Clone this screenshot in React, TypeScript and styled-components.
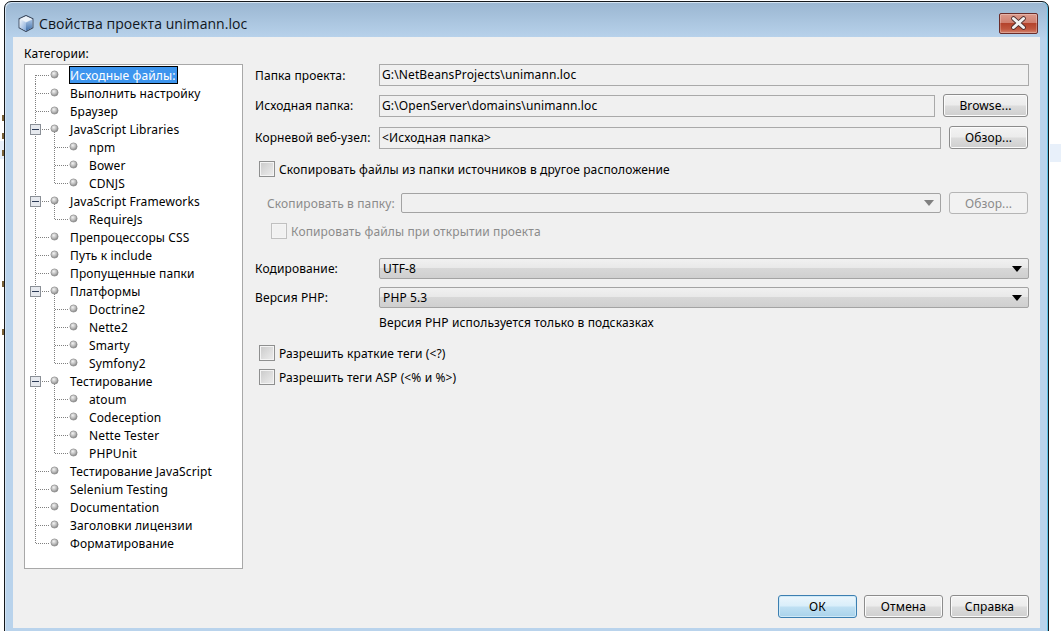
import React from "react";
import styled, { createGlobalStyle, css } from "styled-components";

const GlobalStyle = createGlobalStyle`
    html, body {
        margin: 0;
        height: 100%;
        overflow: hidden;
        background: #fff;
    }
    body {
        font-family: "Noto Sans", "Liberation Sans", sans-serif;
        font-size: 12px;
        letter-spacing: 0.12px;
        color: #000;
    }
`;

const Desktop = styled.div`
    display: flex;
    width: 1061px;
    height: 631px;
    overflow: hidden;
`;

const LeftStrip = styled.div`
    flex: none;
    width: 4px;
    display: flex;
    flex-direction: column;
    align-items: flex-end;
`;

/* bits of the page that lies behind the dialog */
const PageMark = styled.span<{ $top: number }>`
    width: 2px;
    height: 6px;
    margin-top: ${(p) => p.$top}px;
    background: #7a6238;
`;

const LeftPageBit = styled.div`
    align-self: stretch;
    height: 18px;
    margin-top: 2px;
    background: #e8f0fa;
    display: flex;
    justify-content: flex-end;
`;

const RightStrip = styled.div`
    flex: 1;
    padding-top: 144px;
`;

const PageBit = styled.div`
    height: 18px;
    background: #e8f0fa;
    margin-left: 1px;
`;

const Window = styled.div`
    flex: none;
    box-sizing: border-box;
    width: 1045px;
    height: 640px;
    margin-top: 1px;
    border: 1px solid #14181c;
    border-radius: 7px 7px 0 0;
    background: linear-gradient(180deg, #9ab6d1 0, #b9d3ec 37px, #b9d3ec 100%);
    box-shadow: inset -1px 0 0 #5fc4e8, inset 1px 1px 0 #d5e4f2;
    padding: 0 8px;
`;

const TitleBar = styled.div`
    box-sizing: border-box;
    height: 35px;
    display: flex;
    align-items: center;
    padding: 7px 2px 0 5px;
`;

const TitleText = styled.div`
    margin-left: 5px;
    font-family: "Open Sans", "Noto Sans", sans-serif;
    font-size: 14px;
    letter-spacing: 0.06px;
    color: #10161c;
    flex: 1;
`;

const CloseButton = styled.div`
    box-sizing: border-box;
    width: 39px;
    height: 21px;
    display: flex;
    align-items: center;
    justify-content: center;
    border: 1px solid #6b2d2a;
    border-radius: 2px;
    background: linear-gradient(180deg, #dc9a8c 0, #d08070 45%, #b4432c 50%, #c0573f 80%, #d48672 100%);
    box-shadow: inset 0 0 0 1px rgba(255, 255, 255, 0.25);
`;

const Client = styled.div`
    height: 591px;
    box-sizing: border-box;
    background: #f0f0f0;
    padding: 10px 11px 0;
    display: flex;
    flex-direction: column;
`;

const Main = styled.div`
    height: 522px;
    display: flex;
    gap: 12px;
`;

const TreeColumn = styled.div`
    flex: none;
    width: 219px;
    display: flex;
    flex-direction: column;
`;

const TreeCaption = styled.div`
    height: 14px;
    line-height: 14px;
    margin-bottom: 3px;
`;

const TreeBox = styled.div`
    flex: 1;
    box-sizing: border-box;
    background: #fff;
    border: 1px solid #a8a8a8;
    padding-top: 1px;
`;

const TreeRow = styled.div`
    height: 18px;
    display: flex;
    align-items: center;
`;

const TreeGutter = styled.svg`
    flex: none;
    display: block;
`;

const TreeLabel = styled.span<{ $selected?: boolean }>`
    box-sizing: border-box;
    height: 18px;
    line-height: 18px;
    padding: 0 1px 0 0;
    margin-left: -1px;
    white-space: nowrap;
    border: 1px solid transparent;
    ${(p) =>
        p.$selected &&
        css`
            background: #3d95ee;
            border-color: #000;
            color: #fff;
        `}
`;

const Form = styled.div`
    flex: 1;
    display: flex;
    flex-direction: column;
    min-width: 0;
`;

const Row = styled.div<{ $top: number; $inset?: number }>`
    display: flex;
    align-items: center;
    gap: 8px;
    margin-top: ${(p) => p.$top}px;
    padding-left: ${(p) => p.$inset ?? 0}px;
`;

const FieldLabel = styled.label<{ $width?: number; $disabled?: boolean }>`
    flex: none;
    width: ${(p) => p.$width ?? 116}px;
    white-space: nowrap;
    color: ${(p) => (p.$disabled ? "#8b8b8b" : "#000")};
`;

const TextField = styled.div`
    flex: 1;
    box-sizing: border-box;
    height: 22px;
    line-height: 20px;
    padding-left: 2px;
    border: 1px solid #a9a9a9;
    background: #f0f0f0;
    white-space: nowrap;
    margin-left: -8px;
`;

const Button = styled.div<{ $width: number; $height?: number; $disabled?: boolean; $primary?: boolean }>`
    flex: none;
    box-sizing: border-box;
    width: ${(p) => p.$width}px;
    height: ${(p) => p.$height ?? 23}px;
    display: flex;
    align-items: center;
    justify-content: center;
    border: 1px solid #8c8c8c;
    border-radius: 3px;
    background: linear-gradient(180deg, #f3f3f3 0, #ececec 48%, #dcdcdc 52%, #cfcfcf 100%);
    box-shadow: inset 0 0 0 1px #fbfbfb;
    ${(p) =>
        p.$primary &&
        css`
            border-color: #3c7fb1;
            background: linear-gradient(180deg, #ecf6fc 0, #d9eefa 48%, #bfe0f3 52%, #a9d2ea 100%);
            box-shadow: inset 0 0 0 1px #cfe9f7;
        `}
    ${(p) =>
        p.$disabled &&
        css`
            border-color: #b5b5b5;
            background: #f2f2f2;
            box-shadow: none;
            color: #8b8b8b;
        `}
`;

const SideButton = styled(Button)`
    margin-right: 1px;
`;

const Select = styled.div<{ $disabled?: boolean }>`
    flex: 1;
    box-sizing: border-box;
    height: 21px;
    display: flex;
    align-items: center;
    justify-content: space-between;
    padding: 0 5px 0 3px;
    border: 1px solid #a3a3a3;
    border-radius: 2px;
    margin-left: -8px;
    background: linear-gradient(180deg, #f1f1f1 0, #e9e9e9 45%, #d8d8d8 47%, #cfcfcf 100%);
    ${(p) =>
        p.$disabled &&
        css`
            height: 20px;
            margin-left: 0;
            background: #f0f0f0;
        `}
`;

const Arrow = styled.span<{ $disabled?: boolean }>`
    width: 0;
    height: 0;
    border-left: 5px solid transparent;
    border-right: 5px solid transparent;
    border-top: 6px solid ${(p) => (p.$disabled ? "#808080" : "#000")};
    margin-right: 1px;
`;

const CheckRow = styled.div<{ $top: number; $inset: number; $disabled?: boolean }>`
    display: flex;
    align-items: center;
    gap: 4px;
    height: 16px;
    margin-top: ${(p) => p.$top}px;
    padding-left: ${(p) => p.$inset}px;
    white-space: nowrap;
    color: ${(p) => (p.$disabled ? "#8b8b8b" : "#000")};
`;

const CheckBox = styled.span<{ $disabled?: boolean }>`
    flex: none;
    box-sizing: border-box;
    width: 16px;
    height: 16px;
    border: 1px solid ${(p) => (p.$disabled ? "#c0c0c0" : "#8e8f8f")};
    box-shadow: inset 0 0 0 1px #f4f4f4;
    background: ${(p) =>
        p.$disabled ? "#f1f1f1" : "linear-gradient(135deg, #c9c9c9 0, #dedede 55%, #ededed 100%)"};
`;

const Hint = styled.div`
    margin-top: 8px;
    padding-left: 124px;
    height: 14px;
    line-height: 14px;
`;

const Footer = styled.div`
    margin-top: 26px;
    display: flex;
    justify-content: flex-end;
    gap: 7px;
`;

type Node = {
    label: string;
    level: 0 | 1;
    expander?: boolean;
    lastChild?: boolean;
};

const nodes: Node[] = [
    { label: "Исходные файлы:", level: 0 },
    { label: "Выполнить настройку", level: 0 },
    { label: "Браузер", level: 0 },
    { label: "JavaScript Libraries", level: 0, expander: true },
    { label: "npm", level: 1 },
    { label: "Bower", level: 1 },
    { label: "CDNJS", level: 1, lastChild: true },
    { label: "JavaScript Frameworks", level: 0, expander: true },
    { label: "RequireJs", level: 1, lastChild: true },
    { label: "Препроцессоры CSS", level: 0 },
    { label: "Путь к include", level: 0 },
    { label: "Пропущенные папки", level: 0 },
    { label: "Платформы", level: 0, expander: true },
    { label: "Doctrine2", level: 1 },
    { label: "Nette2", level: 1 },
    { label: "Smarty", level: 1 },
    { label: "Symfony2", level: 1, lastChild: true },
    { label: "Тестирование", level: 0, expander: true },
    { label: "atoum", level: 1 },
    { label: "Codeception", level: 1 },
    { label: "Nette Tester", level: 1 },
    { label: "PHPUnit", level: 1, lastChild: true },
    { label: "Тестирование JavaScript", level: 0 },
    { label: "Selenium Testing", level: 0 },
    { label: "Documentation", level: 0 },
    { label: "Заголовки лицензии", level: 0 },
    { label: "Форматирование", level: 0 },
];

const DOT = { stroke: "#808080", strokeDasharray: "1 1", strokeWidth: 1 };

// connector lines, expander box and ball of a tree row, x counted from the box edge
const Gutter = ({ node, index, first, last }: { node: Node; index: number; first: boolean; last: boolean }) => {
    const width = node.level === 0 ? 45 : 64;
    const ballX = node.level === 0 ? 29.5 : 48.5;
    const fill = `ball-${index}`;
    return (
        <TreeGutter width={width} height={18} viewBox={`0 0 ${width} 18`}>
            <defs>
                <radialGradient id={fill} cx="40%" cy="35%" r="70%">
                    <stop offset="0" stopColor="#f4f4f4" />
                    <stop offset="0.6" stopColor="#b5b5b5" />
                    <stop offset="1" stopColor="#7b7b7b" />
                </radialGradient>
            </defs>
            <line x1={10.5} x2={10.5} y1={first ? 9 : 0} y2={last ? 9 : 18} {...DOT} />
            {node.level === 0 && <line x1={11} x2={24} y1={9.5} y2={9.5} {...DOT} />}
            {node.level === 1 && (
                <>
                    <line x1={29.5} x2={29.5} y1={0} y2={node.lastChild ? 9 : 18} {...DOT} />
                    <line x1={30} x2={43} y1={9.5} y2={9.5} {...DOT} />
                </>
            )}
            {node.expander && (
                <>
                    <rect x={5.5} y={4.5} width={10} height={10} fill="#e6e9ee" stroke="#8a8f96" />
                    <line x1={7} x2={14} y1={9.5} y2={9.5} stroke="#2b3a55" />
                    <line x1={29.5} x2={29.5} y1={12} y2={18} {...DOT} />
                </>
            )}
            <circle cx={ballX} cy={8.5} r={3.6} fill={`url(#${fill})`} stroke="#8d8d8d" strokeWidth={0.7} />
        </TreeGutter>
    );
};

const CubeIcon = () => (
    <svg width="16" height="17" viewBox="2 1 14 16">
        <defs>
            <linearGradient id="cube-left" x1="0" y1="0" x2="1" y2="1">
                <stop offset="0" stopColor="#f2f6fb" />
                <stop offset="1" stopColor="#7fa6d8" />
            </linearGradient>
            <linearGradient id="cube-right" x1="0" y1="0" x2="0" y2="1">
                <stop offset="0" stopColor="#a9c4e6" />
                <stop offset="1" stopColor="#3f6ea8" />
            </linearGradient>
        </defs>
        <polygon points="9,1.5 15.5,4.5 15.5,13 9,16.5 2.5,13 2.5,4.5" fill="#d8e4f2" stroke="#39465a" strokeLinejoin="round" />
        <polygon points="3,5.2 9,8 9,16 3,12.8" fill="url(#cube-left)" />
        <polygon points="15,5.2 9,8 9,16 15,12.8" fill="url(#cube-right)" />
        <polygon points="9,2.2 14.6,4.7 9,7.4 3.4,4.7" fill="#eef3f9" />
    </svg>
);

const CloseIcon = () => (
    <svg width="17" height="14" viewBox="0 0 17 14">
        <path d="M3.5 2.5 L13.5 11.5 M13.5 2.5 L3.5 11.5" stroke="#4b2b2b" strokeWidth="4.6" strokeLinecap="round" />
        <path d="M3.5 2.5 L13.5 11.5 M13.5 2.5 L3.5 11.5" stroke="#f2f2f2" strokeWidth="3" strokeLinecap="round" />
    </svg>
);

const App = () => {
    return (
        <Desktop>
            <GlobalStyle />
            <LeftStrip>
                <PageMark $top={115} />
                <PageMark $top={12} />
                <LeftPageBit>
                    <PageMark $top={9} />
                </LeftPageBit>
                <PageMark $top={122} />
                <PageMark $top={42} />
            </LeftStrip>
            <Window>
                <TitleBar>
                    <CubeIcon />
                    <TitleText>Свойства проекта unimann.loc</TitleText>
                    <CloseButton>
                        <CloseIcon />
                    </CloseButton>
                </TitleBar>
                <Client>
                    <Main>
                        <TreeColumn>
                            <TreeCaption>Категории:</TreeCaption>
                            <TreeBox>
                                {nodes.map((node, i) => (
                                    <TreeRow key={node.label}>
                                        <Gutter node={node} index={i} first={i === 0} last={i === nodes.length - 1} />
                                        <TreeLabel $selected={i === 0}>{node.label}</TreeLabel>
                                    </TreeRow>
                                ))}
                            </TreeBox>
                        </TreeColumn>
                        <Form>
                            <Row $top={17}>
                                <FieldLabel $width={124}>Папка проекта:</FieldLabel>
                                <TextField>G:\NetBeansProjects\unimann.loc</TextField>
                            </Row>
                            <Row $top={8}>
                                <FieldLabel $width={124}>Исходная папка:</FieldLabel>
                                <TextField>G:\OpenServer\domains\unimann.loc</TextField>
                                <SideButton $width={85}>Browse...</SideButton>
                            </Row>
                            <Row $top={9}>
                                <FieldLabel $width={124}>Корневой веб-узел:</FieldLabel>
                                <TextField>&lt;Исходная папка&gt;</TextField>
                                <SideButton $width={79}>Обзор...</SideButton>
                            </Row>
                            <CheckRow $top={12} $inset={4}>
                                <CheckBox />
                                Скопировать файлы из папки источников в другое расположение
                            </CheckRow>
                            <Row $top={15} $inset={12}>
                                <FieldLabel $width={126} $disabled>
                                    Скопировать в папку:
                                </FieldLabel>
                                <Select $disabled>
                                    <span />
                                    <Arrow $disabled />
                                </Select>
                                <SideButton $width={79} $height={22} $disabled>
                                    Обзор...
                                </SideButton>
                            </Row>
                            <CheckRow $top={9} $inset={16} $disabled>
                                <CheckBox $disabled />
                                Копировать файлы при открытии проекта
                            </CheckRow>
                            <Row $top={19}>
                                <FieldLabel $width={124}>Кодирование:</FieldLabel>
                                <Select>
                                    UTF-8
                                    <Arrow />
                                </Select>
                            </Row>
                            <Row $top={8}>
                                <FieldLabel $width={124}>Версия PHP:</FieldLabel>
                                <Select>
                                    PHP 5.3
                                    <Arrow />
                                </Select>
                            </Row>
                            <Hint>Версия PHP используется только в подсказках</Hint>
                            <CheckRow $top={15} $inset={4}>
                                <CheckBox />
                                Разрешить краткие теги (&lt;?)
                            </CheckRow>
                            <CheckRow $top={8} $inset={4}>
                                <CheckBox />
                                Разрешить теги ASP (&lt;% и %&gt;)
                            </CheckRow>
                        </Form>
                    </Main>
                    <Footer>
                        <Button $width={79} $primary>
                            ОК
                        </Button>
                        <Button $width={79}>Отмена</Button>
                        <Button $width={79}>Справка</Button>
                    </Footer>
                </Client>
            </Window>
            <RightStrip>
                <PageBit />
            </RightStrip>
        </Desktop>
    );
};

export default App;
